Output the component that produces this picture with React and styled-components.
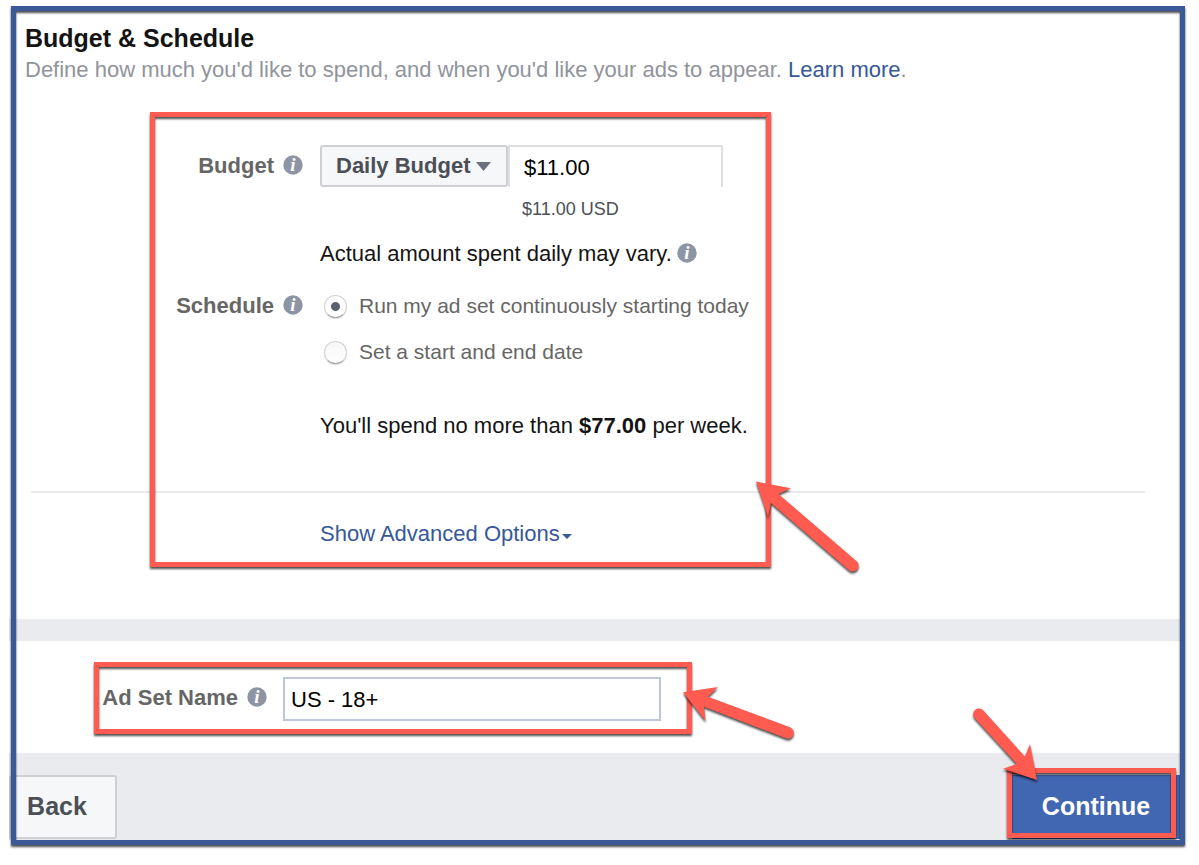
import React from "react";
import styled, { createGlobalStyle } from "styled-components";

const color = {
  frame: "#3b5998",
  callout: "#ff5b50",
  link: "#365899",
  label: "#666666",
  muted: "#90949c",
  slate: "#4b4f56",
  band: "#e9ebee",
};

const GlobalStyle = createGlobalStyle`
  *, *::before, *::after { box-sizing: border-box; }
  body {
    margin: 0;
    background: #fff;
    color: #141414;
    font-family: "Liberation Sans", Arial, Helvetica, sans-serif;
    font-size: 22px;
    line-height: 26px;
  }
  input, select, button { font: inherit; margin: 0; }
`;

const Page = styled.main`
  padding: 6px 14px 20px 9px;
`;

const Panel = styled.div`
  position: relative;
  padding: 5px 5px 5px 0;
`;

const Frame = styled.div`
  position: absolute;
  inset: 0 0 0 2px;
  border: 5px solid ${color.frame};
  filter: drop-shadow(0 2px 1px rgba(0, 0, 0, 0.7));
  pointer-events: none;
`;

const Section = styled.section`
  position: relative;
  padding: ${(p) => p.$pad};
`;

const Heading = styled.header`
  padding-left: 16px;
  margin-bottom: 62px;
`;

const Title = styled.h1`
  margin: 0 0 4px;
  font-size: 25px;
  line-height: 30px;
  font-weight: bold;
`;

const Subtitle = styled.p`
  margin: 0;
  color: ${color.muted};
`;

const Link = styled.a`
  color: ${color.link};
  text-decoration: none;
`;

const Row = styled.div`
  display: grid;
  grid-template-columns: ${(p) => p.$labelWidth}px 1fr;
  column-gap: ${(p) => p.$gap}px;
  margin-top: ${(p) => p.$top || 0}px;
`;

const LabelCell = styled.div`
  display: flex;
  justify-content: flex-end;
  align-items: center;
  gap: 9px;
  height: ${(p) => p.$height}px;
  color: ${color.label};
  font-weight: bold;
`;

const InfoSvg = styled.svg`
  flex: none;
  margin-bottom: 2px;
`;

const Controls = styled.div`
  display: flex;
`;

const SelectWrap = styled.div`
  position: relative;
  width: 188px;
`;

const BudgetSelect = styled.select`
  appearance: none;
  display: block;
  width: 100%;
  height: 42px;
  padding: 0 0 0 14px;
  border: 2px solid #ced0d4;
  border-radius: 3px;
  background: #f6f7f9;
  color: ${color.slate};
  font-weight: bold;
`;

const SelectCaret = styled.svg`
  position: absolute;
  top: 17px;
  right: 17px;
  pointer-events: none;
`;

const AmountInput = styled.input`
  width: 215px;
  height: 42px;
  padding: 2px 14px 0;
  border: 2px solid #dddfe2;
  border-bottom: 0;
  border-radius: 0;
  background: #fff;
  color: #000;
`;

const Helper = styled.div`
  padding: 11px 0 0 202px;
  font-size: 18px;
  line-height: 22px;
  color: ${color.slate};
`;

const Note = styled.p`
  display: flex;
  align-items: center;
  gap: 5px;
  margin: 21px 0 0;
`;

const Options = styled.div`
  display: flex;
  flex-direction: column;
  gap: 20px;
`;

const Option = styled.label`
  display: flex;
  align-items: center;
  gap: 12px;
  padding-left: 4px;
  color: ${color.label};
  font-size: 21px;
  white-space: nowrap;
`;

const Radio = styled.input`
  appearance: none;
  flex: none;
  width: 23px;
  height: 23px;
  border: 1px solid #d2d2d4;
  border-bottom-color: #a8a8ac;
  border-radius: 50%;
  background: linear-gradient(#f7f7f8, #fff);
  box-shadow: 0 1px 1px rgba(0, 0, 0, 0.15);

  &:checked {
    background: radial-gradient(circle, #5a616f 4px, #fff 5px);
  }
`;

const Indented = styled.p`
  margin: ${(p) => p.$top}px 0 0 311px;
`;

const Divider = styled.hr`
  height: 2px;
  margin: 52px 35px 28px 22px;
  border: 0;
  background: ${color.band};
`;

const Advanced = styled.a`
  display: inline-flex;
  align-items: center;
  gap: 2px;
  margin-left: 311px;
  color: ${color.link};
  text-decoration: none;
`;

const AdvancedCaret = styled.svg`
  margin-top: 4px;
`;

const Band = styled.div`
  height: 22px;
  background: ${color.band};
`;

const NameInput = styled.input`
  width: 378px;
  height: 44px;
  padding: 2px 6px 0;
  border: 2px solid #bdc7d8;
  border-radius: 0;
  background: #fff;
  color: #000;
`;

const Footer = styled.footer`
  position: relative;
  display: flex;
  justify-content: space-between;
  padding: 22px 0 1px;
  background: ${color.band};
`;

const FooterButton = styled.button`
  width: ${(p) => (p.$primary ? 168 : 108)}px;
  height: 64px;
  padding: 0 0 2px;
  border: 2px solid ${(p) => (p.$primary ? "#4267b2" : "#ced0d4")};
  border-radius: ${(p) => (p.$primary ? 0 : 3)}px;
  background: ${(p) => (p.$primary ? "#4267b2" : "#f6f7f9")};
  color: ${(p) => (p.$primary ? "#fff" : color.slate)};
  font-size: 25px;
  font-weight: bold;
  text-align: center;
  text-indent: ${(p) => (p.$primary ? 0 : -12)}px;
`;

const Callout = styled.div`
  position: absolute;
  border: 5px solid ${color.callout};
  filter: drop-shadow(0 2px 1px rgba(0, 0, 0, 0.7));
  pointer-events: none;
`;

const BudgetCallout = styled(Callout)`
  top: 101px;
  left: 141px;
  width: 621px;
  height: 455px;
`;

const NameCallout = styled(Callout)`
  top: 21px;
  left: 85px;
  width: 598px;
  height: 72px;
`;

const ContinueCallout = styled(Callout)`
  top: 15px;
  right: 4px;
  width: 169px;
  height: 70px;
`;

const ArrowSvg = styled.svg`
  position: absolute;
  overflow: visible;
  fill: ${color.callout};
  filter: drop-shadow(0 2px 1px rgba(0, 0, 0, 0.7));
  pointer-events: none;
`;

const BudgetArrow = styled(ArrowSvg)`
  top: 470px;
  left: 747px;
`;

const NameArrow = styled(ArrowSvg)`
  top: 46px;
  left: 674px;
`;

const ContinueArrow = styled(ArrowSvg)`
  top: -45px;
  right: 143px;
`;

function InfoIcon() {
  return (
    <InfoSvg width="20" height="20" viewBox="0 0 20 20" role="img" aria-label="Info">
      <circle cx="10" cy="10" r="9.7" fill="#8d94a3" />
      <text
        x="10"
        y="16"
        fill="#fff"
        textAnchor="middle"
        fontFamily="Liberation Serif, serif"
        fontSize="19"
        fontStyle="italic"
        fontWeight="bold"
      >
        i
      </text>
    </InfoSvg>
  );
}

export default function App() {
  return (
    <>
      <GlobalStyle />
      <Page>
        <Panel>
          <Section $pad="12px 0 72px">
            <Heading>
              <Title>Budget &amp; Schedule</Title>
              <Subtitle>
                Define how much you'd like to spend, and when you'd like your ads to
                appear. <Link href="#learn">Learn more</Link>.
              </Subtitle>
            </Heading>

            <Row $labelWidth={294} $gap={17}>
              <LabelCell $height={42}>
                <label htmlFor="budget">Budget</label>
                <InfoIcon />
              </LabelCell>
              <div>
                <Controls>
                  <SelectWrap>
                    <BudgetSelect id="budget" defaultValue="daily">
                      <option value="daily">Daily Budget</option>
                      <option value="lifetime">Lifetime Budget</option>
                    </BudgetSelect>
                    <SelectCaret width="15" height="9" viewBox="0 0 15 9">
                      <path d="M0 0H15L7.5 9Z" fill="#6a707c" />
                    </SelectCaret>
                  </SelectWrap>
                  <AmountInput
                    type="text"
                    aria-label="Budget amount"
                    defaultValue="$11.00"
                  />
                </Controls>
                <Helper>$11.00 USD</Helper>
                <Note>
                  Actual amount spent daily may vary.
                  <InfoIcon />
                </Note>
              </div>
            </Row>

            <Row $labelWidth={294} $gap={17} $top={26}>
              <LabelCell $height={26}>
                <span id="schedule">Schedule</span>
                <InfoIcon />
              </LabelCell>
              <Options role="radiogroup" aria-labelledby="schedule">
                <Option>
                  <Radio type="radio" name="schedule" defaultChecked />
                  Run my ad set continuously starting today
                </Option>
                <Option>
                  <Radio type="radio" name="schedule" />
                  Set a start and end date
                </Option>
              </Options>
            </Row>

            <Indented $top={48}>
              You'll spend no more than <strong>$77.00</strong> per week.
            </Indented>
            <Divider />
            <Advanced href="#advanced">
              Show Advanced Options
              <AdvancedCaret width="10" height="5" viewBox="0 0 10 5">
                <path d="M0 0H10L5 5Z" fill={color.link} />
              </AdvancedCaret>
            </Advanced>

            <BudgetCallout />
            <BudgetArrow width="104" height="92" viewBox="756 481 104 92">
              <path d="M756 481.5L791 488.3L778.5 494L857 561.4A6 6 0 0 1 849 570.3L771 503L768 517Z" />
            </BudgetArrow>
          </Section>

          <Band />

          <Section $pad="36px 0 32px">
            <Row $labelWidth={258} $gap={16}>
              <LabelCell $height={42}>
                <label htmlFor="ad-set-name">Ad Set Name</label>
                <InfoIcon />
              </LabelCell>
              <NameInput id="ad-set-name" type="text" defaultValue="US - 18+" />
            </Row>
            <NameCallout />
            <NameArrow width="112" height="53" viewBox="683 687 112 53">
              <path d="M683 692.3L718 687L708 696.7L790 727.2A5.9 5.9 0 0 1 786 738.3L704 706.8L705.5 721Z" />
            </NameArrow>
          </Section>

          <Footer>
            <FooterButton type="button">Back</FooterButton>
            <FooterButton type="button" $primary>
              Continue
            </FooterButton>
            <ContinueCallout />
            <ContinueArrow width="64" height="72" viewBox="973 708 64 72">
              <path d="M1037 780L1003 768.7L1016.8 764L974.6 718A5.7 5.7 0 0 1 983.4 710.4L1025 756.7L1030 744Z" />
            </ContinueArrow>
          </Footer>
          <Frame />
        </Panel>
      </Page>
    </>
  );
}
